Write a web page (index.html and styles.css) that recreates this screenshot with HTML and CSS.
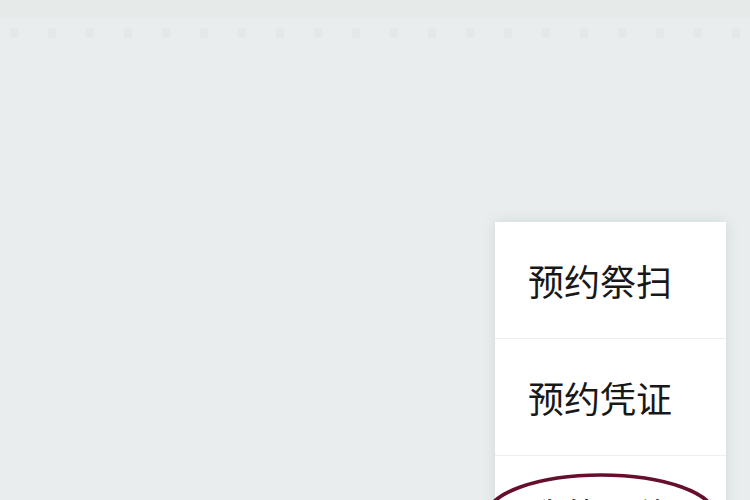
FILE: index.html
```html
<!DOCTYPE html>
<html lang="zh-CN">
<head>
  <meta charset="UTF-8">
  <title>预约</title>
  <link rel="stylesheet" href="styles.css">
</head>
<body>
  <div class="page">
    <div class="top-band"></div>
    <div class="tab-row">
      <span></span><span></span><span></span><span></span><span></span>
      <span></span><span></span><span></span><span></span><span></span>
      <span></span><span></span><span></span><span></span><span></span>
      <span></span><span></span><span></span><span></span><span></span>
    </div>

    <div class="menu">
      <div class="menu-item">预约祭扫</div>
      <div class="menu-item">预约凭证</div>
      <div class="menu-item">我的预约</div>
    </div>

    <svg class="circle-mark" width="240" height="90" viewBox="0 0 240 90">
      <ellipse cx="120" cy="44" rx="114" ry="41" fill="none" stroke="#650e2e" stroke-width="3.5"/>
    </svg>
  </div>
</body>
</html>
```

FILE: styles.css
```css
body {
  margin: 0;
  font-family: "Noto Sans CJK SC", "Noto Sans", sans-serif;
  background: #e9edee;
  overflow: hidden;
}
.page {
  position: relative;
  width: 750px;
  height: 500px;
  overflow: hidden;
}
.top-band {
  height: 18px;
  background: #e6ebe9;
}
.tab-row {
  display: flex;
  gap: 30px;
  padding: 10px 10px 0;
  height: 12px;
}
.tab-row span {
  width: 8px;
  height: 10px;
  background: #e4e8eb;
}
.menu {
  position: absolute;
  left: 495px;
  top: 222px;
  width: 231px;
  background: #fff;
  box-shadow: 0 0 12px rgba(120,140,145,0.22);
}
.menu-item {
  height: 117px;
  box-sizing: border-box;
  padding-left: 33px;
  display: flex;
  align-items: center;
  font-size: 36px;
  color: #181818;
  border-bottom: 1px solid #eeeeee;
}
.circle-mark {
  position: absolute;
  left: 481px;
  top: 472px;
}
```
